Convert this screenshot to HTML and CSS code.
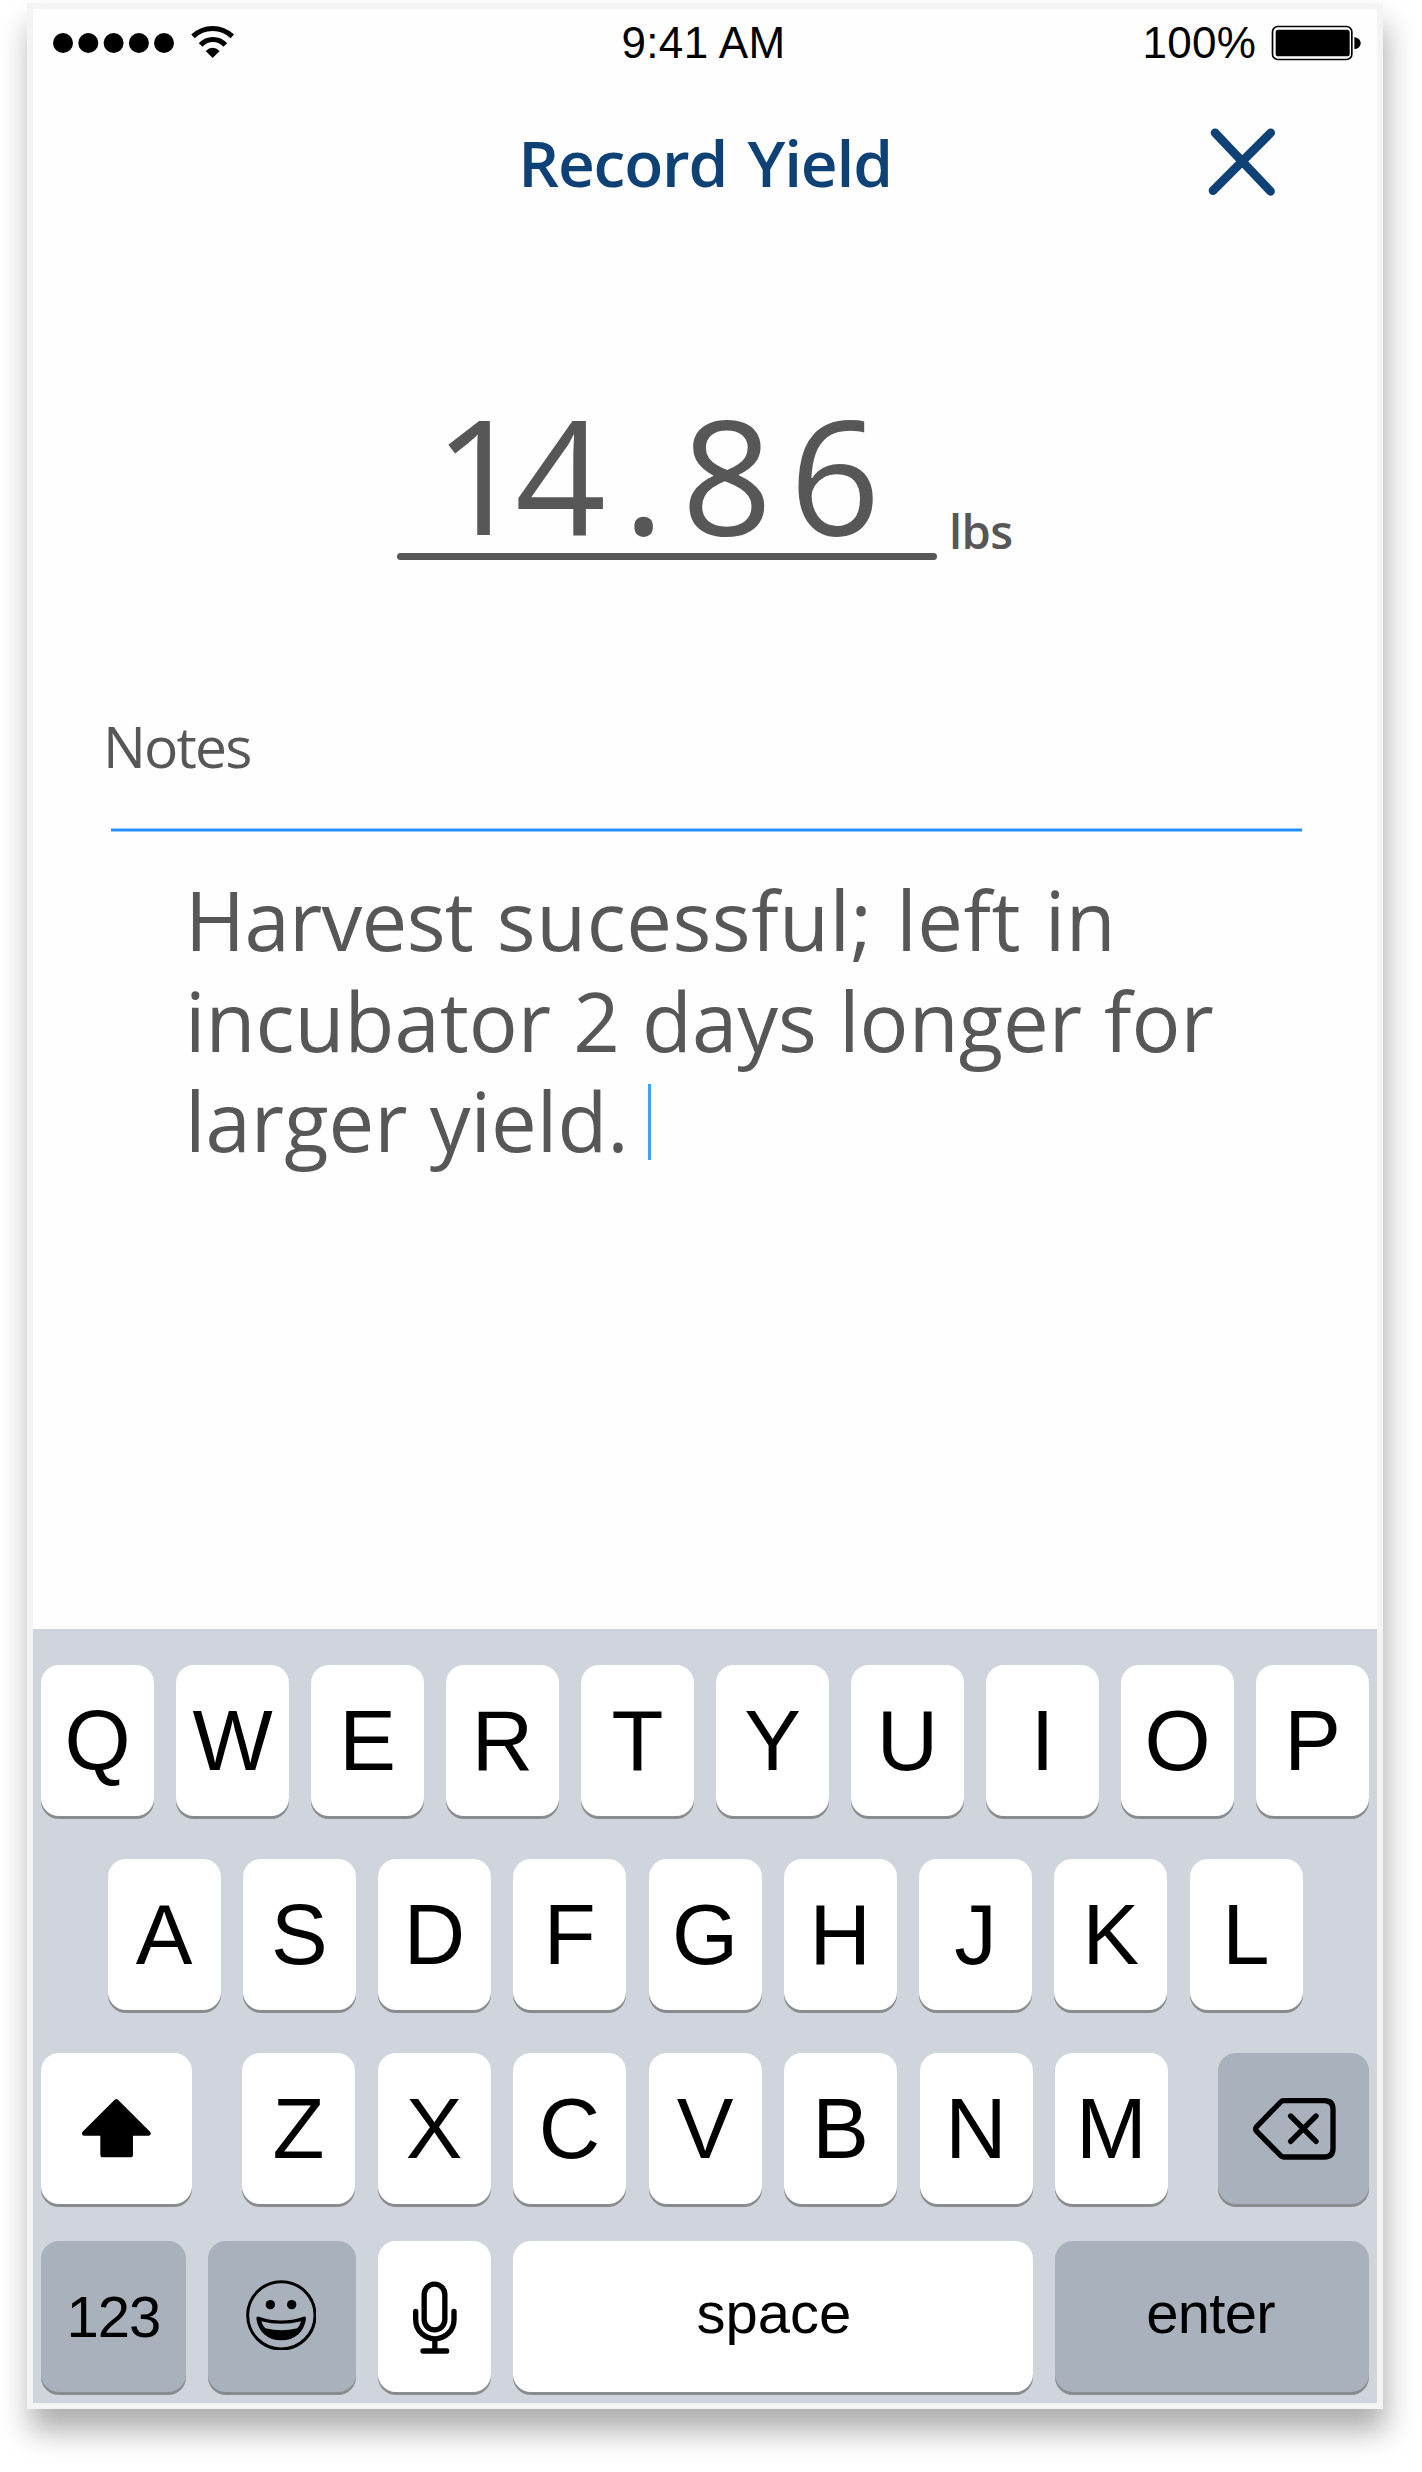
FILE: index.html
```html
<!DOCTYPE html>
<html lang="en">
<head>
<meta charset="utf-8">
<title>Record Yield</title>
<link rel="stylesheet" href="styles.css">
</head>
<body>
<main class="screen">
  <div class="status">
    <div class="status-left">
      <svg class="signal" viewBox="0 0 122 20"><circle cx="10" cy="10" r="10"/><circle cx="35.3" cy="10" r="10"/><circle cx="60.6" cy="10" r="10"/><circle cx="85.9" cy="10" r="10"/><circle cx="111" cy="10" r="10"/></svg>
      <svg class="wifi" viewBox="573 74 130 101"><path class="wifi-arc" d="M579 108A85 85 0 0 1 697 108M602 134A49 49 0 0 1 676 134"/><path d="M617 152Q638 132 659 152L638 173Z"/></svg>
    </div>
    <div class="time">9:41 AM</div>
    <div class="status-right">
      <span>100%</span>
      <svg class="battery" viewBox="970 74 272 108"><rect class="battery-case" x="974.5" y="78.5" width="238" height="99" rx="16"/><rect x="984" y="88" width="222" height="80" rx="8"/><path d="M1220 110q19 4 19 18.5t-19 18.5z"/></svg>
    </div>
  </div>

  <header class="header">
    <h1 class="title">Record Yield</h1>
    <svg class="close" viewBox="0 0 68 68"><path d="M7 4.8L62.5 63.3M62.7 4.8L5 62.6"/></svg>
  </header>

  <section class="yield">
    <div class="yield-field">
      <div class="yield-value"><span class="tight">1</span>4.86</div>
      <div class="yield-bar"></div>
    </div>
    <span class="unit">lbs</span>
  </section>

  <section class="notes">
    <h2 class="notes-label">Notes</h2>
    <div class="notes-rule"></div>
    <p class="notes-text"><span class="narrow">Harvest</span><span class="wide"> sucessful; left in</span><br>incubator 2 days longer for<br>larger yield.<span class="caret"></span></p>
  </section>

  <div class="keyboard">
    <div class="row">
      <div class="key">Q</div><div class="key">W</div><div class="key">E</div><div class="key">R</div><div class="key">T</div><div class="key">Y</div><div class="key">U</div><div class="key">I</div><div class="key">O</div><div class="key">P</div>
    </div>
    <div class="row row-home">
      <div class="key">A</div><div class="key">S</div><div class="key">D</div><div class="key">F</div><div class="key">G</div><div class="key">H</div><div class="key">J</div><div class="key">K</div><div class="key">L</div>
    </div>
    <div class="row">
      <div class="key key-side"><svg class="shift" viewBox="246 238 208 176"><path d="M344 240q5-4 10 0L451 337q4 9-5 11H399v57q0 8-8 8H309q-8 0-8-8V348H252q-9-2-5-11Z"/></svg></div>
      <div class="letters">
        <div class="key">Z</div><div class="key">X</div><div class="key">C</div><div class="key">V</div><div class="key">B</div><div class="key">N</div><div class="key">M</div>
      </div>
      <div class="key key-side dark"><svg class="delete" viewBox="998 234 248 186"><path class="line" d="M1090 242H1212q26 0 26 26V385q0 26-26 26H1090q-5 0-9-4L1009 334q-6-7 0-14L1081 246q4-4 9-4ZM1111 288L1187 364M1187 288L1111 364"/></svg></div>
    </div>
    <div class="row row-bottom">
      <div class="key key-num dark">123</div>
      <div class="key key-emoji dark"><svg class="emoji" viewBox="738 779 212 212"><circle class="face" cx="844" cy="885" r="101"/><circle cx="811" cy="853" r="14"/><circle cx="875" cy="853" r="14"/><path fill-rule="evenodd" d="M769 895q0-8 8-6Q844 912 910 889q8-2 8 6C912 935 885 960 844 960S775 935 769 895ZM784 903Q844 918 903 903Q900 916 892 924Q844 936 796 924Q787 916 784 903Z"/></svg></div>
      <div class="key"><svg class="mic" viewBox="1240 783 131 220"><rect class="line" x="1273.5" y="792.5" width="62" height="137" rx="31"/><path class="line" d="M1248 874v25a57.5 57.5 0 0 0 115 0v-25M1305.5 957V993M1270 993H1341"/></svg></div>
      <div class="key key-space">space</div>
      <div class="key key-enter dark">enter</div>
    </div>
  </div>
</main>
</body>
</html>
```
FILE: styles.css
```css
* { box-sizing: border-box; }

body {
  margin: 0;
  padding: 3px 39px 0 27px;
  height: 2472px;
  background: #fff;
  overflow: hidden;
  font-family: "Open Sans", "Noto Sans", sans-serif;
  color: #575757;
}

h1, h2, p { margin: 0; font-weight: 400; }

svg { display: block; flex: none; }

.screen {
  display: flex;
  flex-direction: column;
  width: 1356px;
  height: 2406px;
  border: 6px solid #f4f4f4;
  background: #fefefe;
  box-shadow: 3px 22px 28px rgba(0, 0, 0, .32);
}

/* Status bar */
.status {
  display: grid;
  grid-template-columns: 1fr auto 1fr;
  align-items: center;
  height: 68px;
  padding: 0 15px 0 20px;
  font: 44px/68px "Liberation Sans", Arial, sans-serif;
  color: #000;
}
.status-left { display: flex; align-items: center; gap: 16px; }
.signal { width: 122px; height: 20px; }
.wifi { width: 43.3px; height: 33.7px; margin-top: -3px; }
.wifi-arc { fill: none; stroke: #000; stroke-width: 15; }
.time { padding-right: 8px; letter-spacing: .4px; }
.status-right { display: flex; justify-content: flex-end; align-items: center; gap: 15px; letter-spacing: .3px; }
.battery { width: 90.7px; height: 36px; }
.battery-case { fill: none; stroke: #000; stroke-width: 5; }

/* Header */
.header {
  display: grid;
  grid-template-columns: 1fr auto 1fr;
  align-items: center;
  height: 169px;
  padding-right: 101px;
  padding-left: 101px;
}
.title {
  grid-column: 2;
  padding-top: 2px;
  font-size: 64px;
  line-height: 80px;
  font-weight: 600;
  letter-spacing: -1.2px;
  word-spacing: 5px;
  color: #0e4175;
}
.close {
  width: 68px;
  height: 68px;
  justify-self: end;
  fill: none;
  stroke: #0e4175;
  stroke-width: 8.7;
  stroke-linecap: round;
}

/* Yield */
.yield {
  display: flex;
  align-items: flex-end;
  margin-top: 148px;
  padding-left: 364px;
}
.yield-field { width: 540px; }
.yield-value {
  padding-left: 37px;
  font-size: 159px;
  line-height: 160px;
  letter-spacing: 17px;
}
.tight { letter-spacing: -10px; }
.yield-bar { height: 7px; margin-top: -1px; border-radius: 4px; background: #575757; }
.unit {
  margin: 0 0 5px 12px;
  font-size: 47px;
  line-height: 48px;
  font-weight: 600;
  letter-spacing: -.5px;
}

/* Notes */
.notes { flex: 1; margin-top: 156px; }
.notes-label {
  padding-left: 70px;
  font-size: 57px;
  line-height: 60px;
  letter-spacing: -1.8px;
}
.notes-rule {
  height: 2px;
  margin: 53px 75px 0 78px;
  background: #2090ff;
  box-shadow: 0 1px #90c8ff, 0 -1px #90c8ff;
}
.notes-text {
  margin-top: 39px;
  padding-left: 152px;
  font-size: 81.5px;
  line-height: 100.7px;
  white-space: nowrap;
  word-spacing: 1px;
}
.narrow { letter-spacing: -.7px; }
.wide { letter-spacing: .5px; word-spacing: 2px; }
.caret {
  display: inline-block;
  width: 3px;
  height: 76px;
  margin-left: 19px;
  vertical-align: -8px;
  background: #3aa5ff;
}

/* Keyboard */
.keyboard {
  height: 774px;
  padding: 36px 8px 0;
  background: #d0d4dc;
  font-family: "Liberation Sans", Arial, sans-serif;
  color: #000;
}
.row { display: flex; justify-content: space-between; margin-bottom: 43px; }
.row-home { padding: 0 66.5px; }
.letters { display: flex; justify-content: space-between; width: 926px; }
.key {
  display: flex;
  flex: none;
  align-items: center;
  justify-content: center;
  width: 113px;
  height: 151px;
  border-radius: 18px;
  background: #fff;
  box-shadow: 0 3px #8a8b8f;
  font-size: 85px;
  line-height: 1;
}
.dark { background: #a9b1bc; }
.key-side { width: 151px; }
.row-bottom { gap: 22px; margin: -6.5px 0 0; }
.key-num { width: 145px; font-size: 58px; letter-spacing: -1px; padding-top: 1px; }
.key-emoji { width: 148px; }
.key-space { flex: 1; font-size: 58px; padding-bottom: 7px; padding-left: 2px; }
.key-enter { width: 314px; font-size: 58px; letter-spacing: -.7px; padding: 0 3px 7px 0; }

.line { fill: none; stroke: #000; stroke-width: 16; stroke-linecap: round; stroke-linejoin: round; }
.shift { width: 69.3px; height: 58.7px; }
.delete { width: 82.7px; height: 62px; margin-left: 2px; }
.emoji { width: 70.7px; height: 70.7px; margin: -2px 2px 0 0; }
.face { fill: none; stroke: #000; stroke-width: 9; }
.mic { width: 43.7px; height: 73.3px; margin: 3px 0 0 1px; }
```
